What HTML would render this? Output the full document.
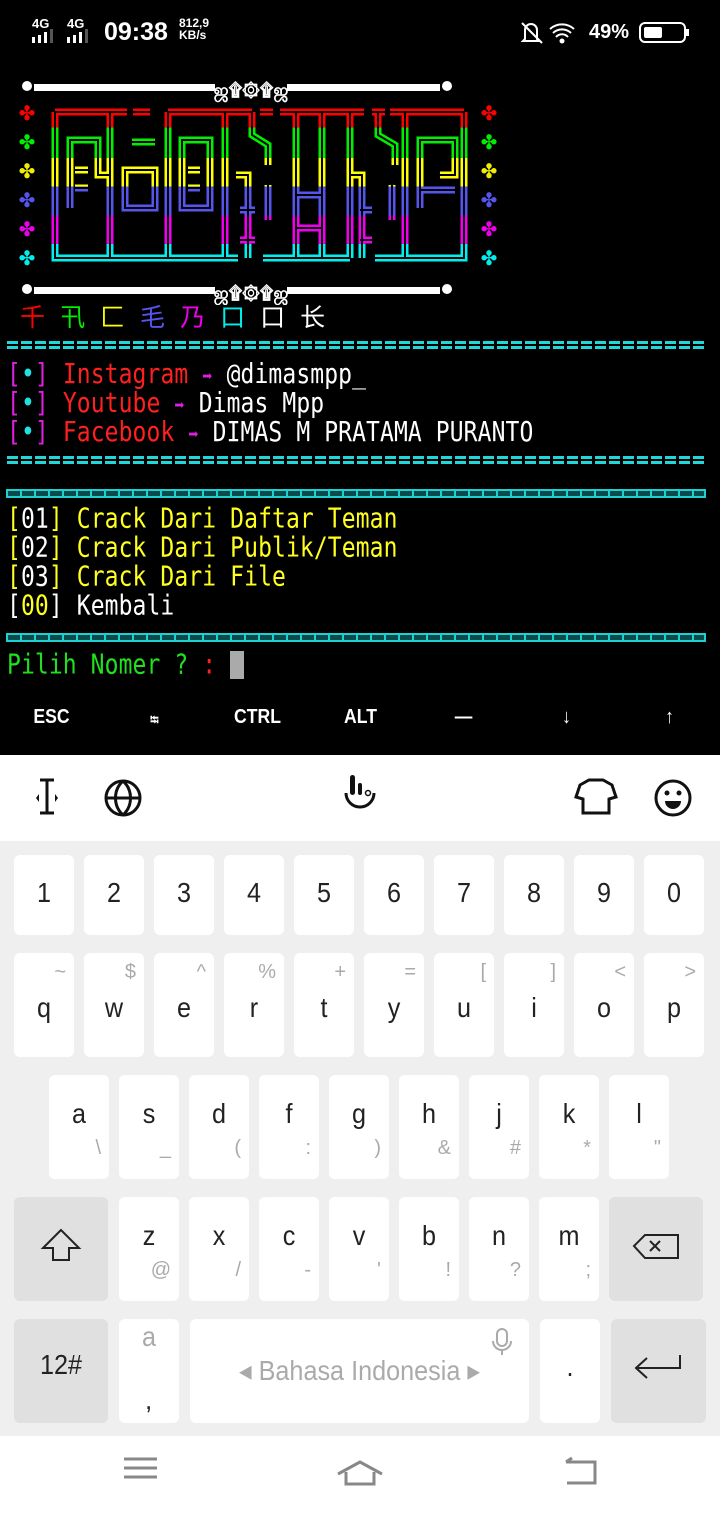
<!DOCTYPE html>
<html><head><meta charset="utf-8"><style>
*{margin:0;padding:0;box-sizing:border-box}
body{width:720px;height:1520px;background:#000;position:relative;overflow:hidden;font-family:"Liberation Sans","Noto Sans CJK SC",sans-serif}
.a{position:absolute;white-space:pre}
.t{font-family:"DejaVu Sans Mono","Liberation Mono",monospace;font-size:23px;line-height:29px;color:#fff;letter-spacing:0.1px;transform:scaleY(1.2);transform-origin:0 50%}
.m{color:#e020e0}.c{color:#20e0e0}.r{color:#ff2020}.y{color:#ffff20}.g{color:#20e020}.w{color:#fff}
.ar{color:#e020e0;font-size:17px}
.eq{position:absolute;left:7px;width:699px;height:8px;background:repeating-linear-gradient(90deg,#20d8d8 0 11px,transparent 11px 14px)}
.eq::before{content:"";position:absolute;left:0;right:0;top:3px;height:2px;background:#000}
.bx{position:absolute;left:6px;width:700px;height:9px;border:2px solid #20d0d0;background:repeating-linear-gradient(90deg,#0a4a4a 0 12px,#20d0d0 12px 14px)}
.xk{position:absolute;top:706px;color:#fff;font-size:20px;font-weight:bold;width:103px;text-align:center;font-family:"Liberation Sans",sans-serif;transform:scaleX(.88)}
.k{position:absolute;background:#fff;border-radius:6px;width:60px;text-align:center;color:#222}
.k .l{position:absolute;left:0;right:0;font-size:28px;transform:scaleX(.9)}
.k .h{position:absolute;right:8px;font-size:20px;color:#aaa}
.gk{background:#e0e0e0}
</style></head><body>
<!-- status bar -->
<div class="a" style="left:32px;top:16px;color:#fff;font-size:13px;font-weight:bold">4G</div>
<div class="a" style="left:67px;top:16px;color:#fff;font-size:13px;font-weight:bold">4G</div>
<svg class="a" style="left:32px;top:29px" width="65" height="16"><g fill="#fff"><rect x="0" y="8" width="3" height="6"/><rect x="6" y="6" width="3" height="8"/><rect x="12" y="3" width="3" height="11"/><rect x="35" y="8" width="3" height="6"/><rect x="41" y="6" width="3" height="8"/><rect x="47" y="3" width="3" height="11"/></g><g fill="#555"><rect x="18" y="0" width="3" height="14"/><rect x="53" y="0" width="3" height="14"/></g></svg>
<div class="a" style="left:104px;top:18px;color:#fff;font-size:25px;font-weight:bold">09:38</div>
<div class="a" style="left:179px;top:17px;color:#fff;font-size:12px;font-weight:bold;line-height:12px">812,9<br>KB/s</div>
<svg class="a" style="left:520px;top:20px" width="170" height="28"><g stroke="#fff" stroke-width="2" fill="none"><path d="M5 19V10a6 6 0 0 1 12 0v9l2 2H3z"/><path d="M2 3l20 20"/><path d="M30 9a18 18 0 0 1 24 0M33 13a13 13 0 0 1 18 0M36 17a8 8 0 0 1 12 0"/></g><circle cx="42" cy="21" r="2.5" fill="#fff"/><rect x="120" y="3" width="45" height="19" rx="5" stroke="#fff" stroke-width="2" fill="none"/><rect x="124" y="7" width="18" height="11" rx="2" fill="#fff"/><rect x="166" y="9" width="3" height="7" fill="#fff"/></svg>
<div class="a" style="left:589px;top:21px;color:#fff;font-size:20px;font-weight:bold">49%</div>

<!-- banner -->
<svg class="a" style="left:0;top:70px" width="510" height="235">
<defs><linearGradient id="bg" gradientUnits="userSpaceOnUse" x1="0" y1="35" x2="0" y2="195"><stop offset="0" stop-color="#f00"/><stop offset=".14" stop-color="#f00"/><stop offset=".14" stop-color="#0e0"/><stop offset=".33" stop-color="#0e0"/><stop offset=".33" stop-color="#ff0"/><stop offset=".51" stop-color="#ff0"/><stop offset=".51" stop-color="#55e"/><stop offset=".69" stop-color="#55e"/><stop offset=".69" stop-color="#e0e"/><stop offset=".87" stop-color="#e0e"/><stop offset=".87" stop-color="#0ee"/><stop offset="1" stop-color="#0ee"/></linearGradient></defs>
<g fill="#fff"><rect x="34" y="14" width="406" height="7"/><circle cx="27" cy="16" r="5"/><circle cx="447" cy="16" r="5"/><rect x="34" y="217" width="406" height="7"/><circle cx="27" cy="219" r="5"/><circle cx="447" cy="219" r="5"/><rect x="215" y="6" width="72" height="22" fill="#000"/><rect x="215" y="209" width="72" height="22" fill="#000"/></g>
<text x="251" y="26" fill="#fff" font-size="18" text-anchor="middle" font-weight="bold">ஜ۩۞۩ஜ</text>
<text x="251" y="229" fill="#fff" font-size="18" text-anchor="middle" font-weight="bold">ஜ۩۞۩ஜ</text>
<g fill="none" stroke="url(#bg)" stroke-width="7">
<path d="M55 42H127M168 42H252M280 42H364M390 42H464M133 42H150M260 42H273M372 42H385"/>
<path d="M55 42V188H238M263 188H350M375 188H464V42"/>
<path d="M110 42V188M168 42V188M225 42V188M252 42V65L268 75V95M296 42V188M322 42V188M350 42V188M378 42V65L395 75V95M405 42V188"/>
<path d="M70 138V70H98V105H110M125 100H155V138H125ZM182 70H210V138H182ZM420 138V70H455V105H440M420 120H455"/>
<path d="M75 100H88M132 72H155M132 100H150M75 118H88M188 100H200M188 118H200M240 140H255M360 140H372M240 170H255M360 170H372M236 105H248V188M350 105H362V188M268 115V150M296 125H322M296 158H322M392 115V150"/>
</g>
<g fill="none" stroke="#000" stroke-width="2">
<path d="M55 42H127M168 42H252M280 42H364M390 42H464M133 42H150M260 42H273M372 42H385"/>
<path d="M55 42V188H238M263 188H350M375 188H464V42"/>
<path d="M110 42V188M168 42V188M225 42V188M252 42V65L268 75V95M296 42V188M322 42V188M350 42V188M378 42V65L395 75V95M405 42V188"/>
<path d="M70 138V70H98V105H110M125 100H155V138H125ZM182 70H210V138H182ZM420 138V70H455V105H440M420 120H455"/>
<path d="M75 100H88M132 72H155M132 100H150M75 118H88M188 100H200M188 118H200M240 140H255M360 140H372M240 170H255M360 170H372M236 105H248V188M350 105H362V188M268 115V150M296 125H322M296 158H322M392 115V150"/>
</g>
<g font-size="20" text-anchor="middle">
<text x="27" y="50" fill="#f00">✤</text><text x="489" y="50" fill="#f00">✤</text>
<text x="27" y="79" fill="#0e0">✤</text><text x="489" y="79" fill="#0e0">✤</text>
<text x="27" y="108" fill="#ee0">✤</text><text x="489" y="108" fill="#ee0">✤</text>
<text x="27" y="137" fill="#55e">✤</text><text x="489" y="137" fill="#55e">✤</text>
<text x="27" y="166" fill="#e0e">✤</text><text x="489" y="166" fill="#e0e">✤</text>
<text x="27" y="195" fill="#0ee">✤</text><text x="489" y="195" fill="#0ee">✤</text>
</g>
</svg>
<div class="a" style="left:20px;top:300px;font-size:25px;font-family:'Noto Sans CJK SC',sans-serif;letter-spacing:15px;line-height:32px"><span style="color:#f00">千</span><span style="color:#0e0">卂</span><span style="color:#ff0">匚</span><span style="color:#55e">毛</span><span style="color:#e0e">乃</span><span style="color:#0ee">口</span><span style="color:#fff">口</span><span style="color:#fff">长</span></div>

<!-- terminal text -->
<div class="eq" style="top:341px"></div>
<div class="a t" style="left:7px;top:361px"><span class="m">[</span><span class="c">•</span><span class="m">]</span> <span class="r">Instagram</span> <span class="ar">➡</span> @dimasmpp_</div>
<div class="a t" style="left:7px;top:390px"><span class="m">[</span><span class="c">•</span><span class="m">]</span> <span class="r">Youtube</span> <span class="ar">➡</span> Dimas Mpp</div>
<div class="a t" style="left:7px;top:419px"><span class="m">[</span><span class="c">•</span><span class="m">]</span> <span class="r">Facebook</span> <span class="ar">➡</span> DIMAS M PRATAMA PURANTO</div>
<div class="eq" style="top:456px"></div>
<div class="bx" style="top:489px"></div>
<div class="a t" style="left:7px;top:505px"><span class="y">[</span>01<span class="y">] Crack Dari Daftar Teman</span></div>
<div class="a t" style="left:7px;top:534px"><span class="y">[</span>02<span class="y">] Crack Dari Publik/Teman</span></div>
<div class="a t" style="left:7px;top:563px"><span class="y">[</span>03<span class="y">] Crack Dari File</span></div>
<div class="a t" style="left:7px;top:592px">[<span class="y">00</span>] Kembali</div>
<div class="bx" style="top:633px"></div>
<div class="a t" style="left:7px;top:651px"><span class="g">Pilih Nomer ? </span><span class="r">:</span></div>
<div class="a" style="left:230px;top:651px;width:14px;height:28px;background:#aaa"></div>

<!-- extra keys -->
<div class="xk" style="left:0">ESC</div>
<div class="xk" style="left:103px;font-size:13px;top:711px">⭾</div>
<div class="xk" style="left:206px">CTRL</div>
<div class="xk" style="left:309px">ALT</div>
<div class="xk" style="left:412px">—</div>
<div class="xk" style="left:515px;font-weight:normal">↓</div>
<div class="xk" style="left:618px;font-weight:normal">↑</div>

<!-- toolbar -->
<div class="a" style="left:0;top:755px;width:720px;height:86px;background:#fff"></div>
<svg class="a" style="left:0;top:755px" width="720" height="86">
<g stroke="#111" stroke-width="3" fill="none">
<path d="M47 25V58M40 25H54M40 58H54"/>
<circle cx="123" cy="43" r="17"/><path d="M106 43H140M123 26C113 35 113 51 123 60M123 26C133 35 133 51 123 60"/>
<path d="M346 38a14 14 0 0 0 28 0"/>
<path d="M580 30l9-5h14l9 5 4 12-7 2v14h-26V44l-7-2z"/>
<circle cx="673" cy="43" r="17"/>
</g>
<path d="M36 43l3-4v8zM58 43l-3-4v8z" fill="#111"/>
<rect x="350" y="20" width="5" height="20" rx="2.5" fill="#111"/><rect x="358" y="28" width="4" height="12" rx="2" fill="#111"/><circle cx="368" cy="38" r="2.5" stroke="#111" stroke-width="1.5" fill="none"/>
<circle cx="667" cy="38" r="2.5" fill="#111"/><circle cx="679" cy="38" r="2.5" fill="#111"/><path d="M665 46h16a8 8 0 0 1-16 0z" fill="#111"/>
</svg>

<!-- keyboard -->
<div class="a" style="left:0;top:841px;width:720px;height:595px;background:#efefef"></div>
<div id="kb"></div>
<div class="a" style="left:0;top:1436px;width:720px;height:84px;background:#fff"></div>
<svg class="a" style="left:0;top:1436px" width="720" height="84"><g stroke="#888" stroke-width="3" fill="none"><path d="M124 23H157M124 32H157M124 41H157"/><path d="M338 38L360 26L382 38M346 36V48H374V36"/><path d="M566 26H595V47H567M566 26l6-4"/></g></svg>

<script>
var kb=document.getElementById('kb'),h='';
function key(x,y,w,hh,lab,hint,cls,ly,hy){h+='<div class="k '+(cls||'')+'" style="left:'+x+'px;top:'+y+'px;width:'+w+'px;height:'+hh+'px">'+(lab?'<div class="l" style="top:'+ly+'px">'+lab+'</div>':'')+(hint?'<div class="h" style="top:'+hy+'px">'+hint+'</div>':'')+'</div>';}
var n='1234567890';for(var i=0;i<10;i++)key(14+70*i,855,60,80,n[i],'','',22,0);
var q='qwertyuiop',qh='~$^%+=[]<>';for(i=0;i<10;i++)key(14+70*i,953,60,104,q[i],qh[i],'',39,8);
var a='asdfghjkl',ah='\\_(:)&#*"';for(i=0;i<9;i++)key(49+70*i,1075,60,104,a[i],ah[i],'',23,62);
key(14,1197,94,104,'','','gk',0,0);
var z='zxcvbnm',zh="@/-'!?;";for(i=0;i<7;i++)key(119+70*i,1197,60,104,z[i],zh[i],'',23,62);
key(609,1197,94,104,'','','gk',0,0);
key(14,1319,94,104,'12#','','gk',30,0);
key(119,1319,60,104,'<span style="color:#aaa">a</span>','','',2,0);
h+='<div class="a" style="left:145px;top:1385px;font-size:26px;color:#222">,</div>';
key(190,1319,339,104,'<span style="color:#aaa;font-size:28px">◂ Bahasa Indonesia ▸</span>','','',35,0);
key(540,1319,60,104,'.','','',32,0);
key(611,1319,95,104,'','','gk',0,0);
kb.innerHTML=h;
</script>
<svg class="a" style="left:0;top:1190px" width="720" height="240"><g stroke="#222" stroke-width="2" fill="none"><path d="M61 40L43 58H53V70H69V58H79z"/><path d="M634 56L645 45H678V68H645z"/><path d="M650 51l10 10M660 51l-10 10"/><path d="M680 165V178H637M647 168L636 178L647 188"/></g><g stroke="#aaa" stroke-width="2" fill="none"><rect x="497" y="139" width="10" height="17" rx="5"/><path d="M493 151a9 9 0 0 0 18 0M502 160v5"/></g></svg>
</body></html>
